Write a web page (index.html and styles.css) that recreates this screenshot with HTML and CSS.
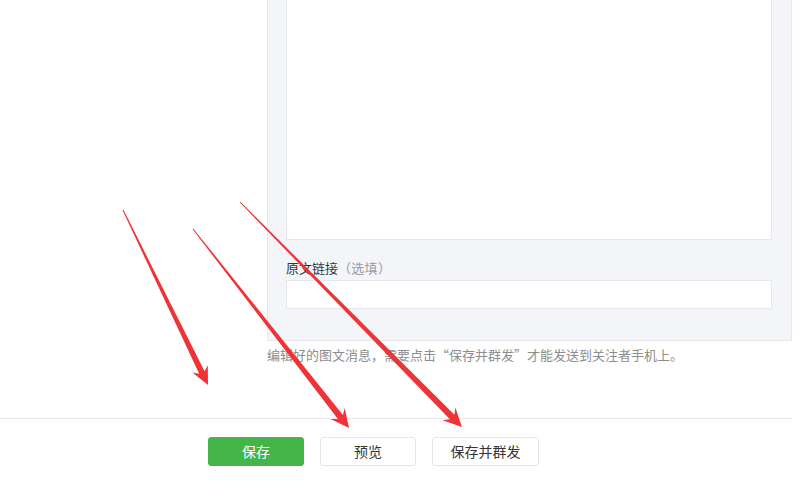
FILE: index.html
```html
<!DOCTYPE html>
<html lang="zh-CN">
<head>
<meta charset="utf-8">
<title>编辑图文消息</title>
<link rel="stylesheet" href="styles.css">
</head>
<body>
<div class="page">
  <div class="editor">
    <div class="panel">
      <div class="content-area"></div>
      <div class="field-label">原文链接<span class="optional">（选填）</span></div>
      <div class="text-input"></div>
    </div>
    <p class="hint">编辑好的图文消息，需要点击“保存并群发”才能发送到关注者手机上。</p>
  </div>
  <div class="toolbar">
    <button class="btn btn-primary btn-save">保存</button>
    <button class="btn btn-default btn-preview">预览</button>
    <button class="btn btn-default btn-send">保存并群发</button>
  </div>
  <svg class="arrows" width="801" height="486" viewBox="0 0 801 486" aria-hidden="true">
    <g transform="translate(123 210) rotate(64.1)">
      <polygon class="arrow" points="0,-0.5 180.6,-3 176.6,-8.5 194.6,0 176.6,8.5 180.6,3 0,0.5"/>
    </g>
    <g transform="translate(193 229) rotate(51.9)">
      <polygon class="arrow" points="0,-0.5 238.9,-3.2 234.4,-9 252.9,0 234.4,9 238.9,3.2 0,0.5"/>
    </g>
    <g transform="translate(240 202) rotate(45.4)">
      <polygon class="arrow" points="0,-0.5 302.1,-3.2 297.6,-9 316.1,0 297.6,9 302.1,3.2 0,0.5"/>
    </g>
  </svg>
</div>
</body>
</html>
```

FILE: styles.css
```css
html, body {
  margin: 0;
  padding: 0;
  background: #ffffff;
}

body {
  font-family: "Noto Sans CJK SC", "Noto Sans", "Liberation Sans", sans-serif;
  color: #353535;
}

.page {
  position: relative;
  width: 801px;
  height: 486px;
  overflow: hidden;
}

.editor {
  margin-left: 267px;
  width: 525px;
}

.panel {
  background: #f4f5f9;
  border: 1px solid #e7e7eb;
  border-top: none;
  padding: 0 19px 31px 18px;
}

.content-area {
  height: 239px;
  background: #ffffff;
  border: 1px solid #e7e7eb;
  border-top: none;
}

.field-label {
  margin-top: 18px;
  font-size: 13px;
  line-height: 20px;
  height: 20px;
  color: #353535;
}

.optional {
  color: #9a9a9a;
  letter-spacing: 0.3px;
}

.text-input {
  margin-top: 2px;
  height: 27px;
  background: #ffffff;
  border: 1px solid #e7e7eb;
}

.hint {
  margin: 4px 0 0 0;
  font-size: 13px;
  line-height: 20px;
  color: #8d8d8d;
  white-space: nowrap;
}

.toolbar {
  position: absolute;
  left: 0;
  top: 418px;
  width: 792px;
  border-top: 1px solid #e7e7eb;
  padding: 18px 0 0 208px;
  box-sizing: border-box;
  display: flex;
  gap: 16px;
}

.btn {
  height: 29px;
  border-radius: 3px;
  font-family: "Noto Sans CJK SC", "Noto Sans", sans-serif;
  font-size: 14px;
  line-height: 27px;
  padding: 0;
  box-sizing: border-box;
  cursor: pointer;
}

.btn-primary {
  background: #44b549;
  border: 1px solid #44b549;
  color: #ffffff;
}

.btn-default {
  background: #ffffff;
  border: 1px solid #e4e8eb;
  color: #353535;
}

.btn-save,
.btn-preview {
  width: 96px;
}

.btn-send {
  width: 107px;
}

.arrows {
  position: absolute;
  left: 0;
  top: 0;
  pointer-events: none;
}

.arrow {
  fill: #ef3337;
}
```
